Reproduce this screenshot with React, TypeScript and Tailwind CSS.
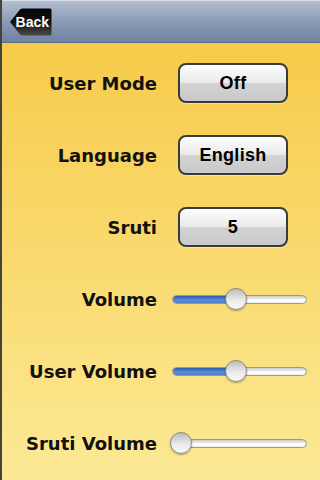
import React, { useState } from 'react';

const labelFont = { fontFamily: '"DejaVu Sans", sans-serif' };

const SettingButton = ({ text }: { text: string }) => (
  <button
    className="w-[110px] h-[40px] rounded-[8px] border-2 border-[#3a3a3a] bg-[linear-gradient(to_bottom,#fdfdfd_0%,#ebebeb_48%,#d2d2d2_52%,#c9c9c9_100%)] text-[18px] font-bold text-black tracking-[0.3px] shadow-[0_1px_0_rgba(255,255,255,0.4)] [font-family:'Liberation_Sans',Arial,sans-serif]"
  >
    {text}
  </button>
);

const Slider = ({ value }: { value: number }) => {
  // track 135px, thumb 22px
  const thumbLeft = value * 113;
  return (
    <div className="relative w-[135px] h-[22px] flex items-center">
      <div className="w-full h-[9px] rounded-full border border-[#9a9a8a] bg-[linear-gradient(to_bottom,#c9c9c9,#ffffff_60%,#f0f0f0)] overflow-hidden flex">
        <div
          className="h-full bg-[linear-gradient(to_bottom,#2a5aa8,#5a8ed8_60%,#4a7cc8)]"
          style={{ width: `${thumbLeft + 11}px` }}
        />
      </div>
      <div
        className="absolute top-0 w-[22px] h-[22px] rounded-full border border-[#8a8a80] bg-[linear-gradient(to_bottom,#bdbdbd,#eeeeee_60%,#f7f7f7)] shadow-[0_1px_2px_rgba(0,0,0,0.3)]"
        style={{ left: `${thumbLeft - (value === 0 ? 2 : 0)}px` }}
      />
    </div>
  );
};

const Row = ({ label, children }: { label: string; children: React.ReactNode }) => (
  <div className="h-[72px] flex items-center">
    <div className="w-[155px] text-right text-[18px] font-bold text-[#111]" style={labelFont}>
      {label}
    </div>
    {children}
  </div>
);

const App = () => {
  const [values] = useState({ volume: 0.47, userVolume: 0.47, srutiVolume: 0 });

  return (
    <div className="w-[320px] h-[480px] overflow-hidden flex flex-col border-l-2 border-[#44443a] bg-[linear-gradient(to_bottom,#f6c843,#fce995)]">
      {/* nav bar */}
      <header className="h-[43px] shrink-0 flex items-center pl-[8px] pt-[1px] border-t border-[#d6dce6] border-b border-b-[#5a6c88] bg-[linear-gradient(to_bottom,#b3bfcf,#8b9bb5_50%,#6e83a2)]">
        <button className="relative w-[42px] h-[28px] flex items-center justify-end pr-[3px] text-white text-[14px] font-bold [font-family:'Liberation_Sans',Arial,sans-serif]">
          <svg className="absolute inset-0" width="42" height="28" viewBox="0 0 42 28">
            <defs>
              <linearGradient id="backg" x1="0" y1="0" x2="0" y2="1">
                <stop offset="0" stopColor="#050505" />
                <stop offset="0.5" stopColor="#111" />
                <stop offset="1" stopColor="#4a4a4a" />
              </linearGradient>
            </defs>
            <path d="M0 14 L10 1.5 Q11 0.5 12.5 0.5 L40 0.5 Q41.5 0.5 41.5 2 L41.5 26 Q41.5 27.5 40 27.5 L12.5 27.5 Q11 27.5 10 26.5 Z" fill="url(#backg)" />
          </svg>
          <span className="relative">Back</span>
        </button>
      </header>

      <div className="pt-[4px] flex flex-col">
        <Row label="User Mode">
          <div className="ml-[21px]"><SettingButton text="Off" /></div>
        </Row>
        <Row label="Language">
          <div className="ml-[21px]"><SettingButton text="English" /></div>
        </Row>
        <Row label="Sruti">
          <div className="ml-[21px]"><SettingButton text="5" /></div>
        </Row>
        <Row label="Volume">
          <div className="ml-[15px]"><Slider value={values.volume} /></div>
        </Row>
        <Row label="User Volume">
          <div className="ml-[15px]"><Slider value={values.userVolume} /></div>
        </Row>
        <Row label="Sruti Volume">
          <div className="ml-[15px]"><Slider value={values.srutiVolume} /></div>
        </Row>
      </div>
    </div>
  );
};

export default App;
